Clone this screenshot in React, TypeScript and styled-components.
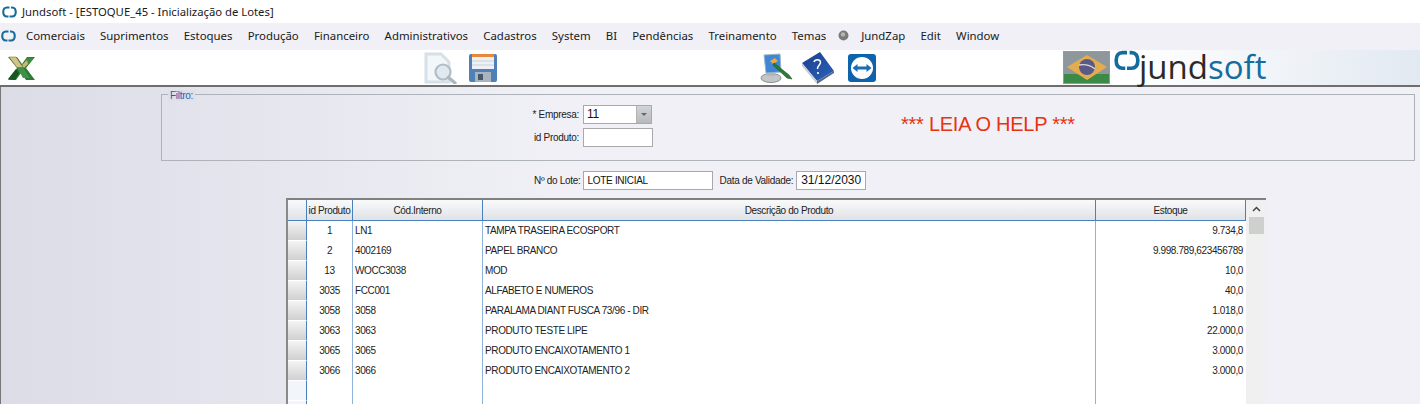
import React from "react";
import styled, { createGlobalStyle } from "styled-components";

const GlobalStyle = createGlobalStyle`
  html, body { margin: 0; padding: 0; background: #f0f0f5; overflow: hidden; }
  body { font-family: "Liberation Sans", Arial, sans-serif; }
`;

const Window = styled.div`
  width: 1420px;
  height: 404px;
  display: flex;
  flex-direction: column;
  overflow: hidden;
`;

const TitleBar = styled.div`
  height: 23px;
  flex: none;
  display: flex;
  align-items: center;
  gap: 5px;
  padding-left: 2px;
  background: #fff;
  font: 11.3px "Noto Sans", sans-serif;
  color: #1a1a1a;
`;

const MenuBar = styled.div`
  height: 27px;
  flex: none;
  box-sizing: border-box;
  padding: 0 0 2px 1px;
  display: flex;
  align-items: center;
  background: #f0f0f6;
  font: 11.4px "Noto Sans", sans-serif;
  color: #1a1a1a;
`;

const MenuList = styled.div`
  display: flex;
  align-items: center;
  gap: 15.2px;
  margin-left: 10px;
`;

const MenuDot = styled.span`
  display: flex;
  margin: 0 -3.5px 0 -3px;
`;

const ToolBar = styled.div`
  height: 35px;
  flex: none;
  display: flex;
  align-items: center;
  padding-left: 7px;
  background: linear-gradient(90deg, #fff 0, #fff 1130px, #e2e9f1 1420px);
  border-bottom: 2px solid #6e6e6e;
`;

const ToolSlot = styled.div<{ $left?: number }>`
  display: flex;
  margin-left: ${(p) => p.$left ?? 0}px;
`;

const Logo = styled.div`
  display: flex;
  align-items: flex-start;
  margin-left: 4px;
  height: 35px;
  width: 158px;
`;

const LogoText = styled.div`
  font: 500 33px/33px "Open Sans", sans-serif;
  margin: 0 0 0 -1px;
  color: #2c2a28;
  b { font-weight: 500; color: #156d9e; }
`;

const Main = styled.div`
  flex: 1;
  display: flex;
  flex-direction: column;
  padding: 7px 5px 0 160px;
  background: linear-gradient(90deg, #dcdce7 0, #f0f0f6 560px);
  border-left: 1px solid #777;
  min-height: 0;
`;

const FilterBox = styled.div`
  flex: none;
  height: 67px;
  box-sizing: border-box;
  border: 1px solid #aeb3ba;
  position: relative;
  display: grid;
  grid-template-columns: 421px 70px 1fr;
  grid-template-rows: 23px 23px;
  align-content: start;
  padding-top: 10px;
  letter-spacing: -0.3px;
`;

const Legend = styled.span`
  position: absolute;
  left: 6px;
  top: -5px;
  padding: 0 2px;
  background: #dfdfe9;
  font: 10px/11px "Liberation Sans", sans-serif;
  color: #2a5db0;
`;

const FieldLabel = styled.label`
  font-size: 10px;
  color: #222;
  display: flex;
  align-items: center;
  justify-content: flex-end;
  padding-right: 4px;
  height: 19px;
`;

const ComboBox = styled.div`
  width: 69px;
  height: 19px;
  display: flex;
  box-sizing: border-box;
  border: 1px solid #a9a9a9;
  background: #fff;
`;

const ComboValue = styled.span`
  flex: 1;
  font-size: 12px;
  line-height: 17px;
  padding-left: 3px;
  color: #111;
`;

const ComboButton = styled.span`
  width: 14px;
  background: linear-gradient(180deg, #d2d5d8, #b6babd);
  border-left: 1px solid #b4b4b4;
  display: flex;
  align-items: center;
  justify-content: center;
  &::after {
    content: "";
    border-left: 3px solid transparent;
    border-right: 3px solid transparent;
    border-top: 3px solid #666;
  }
`;

const TextField = styled.div<{ $width: number }>`
  width: ${(p) => p.$width}px;
  height: 19px;
  box-sizing: border-box;
  border: 1px solid #a9a9a9;
  background: #fff;
  font-size: 10px;
  line-height: 18px;
  padding-left: 4px;
  color: #111;
`;

const DateField = styled(TextField)`
  font-size: 12px;
  line-height: 16px;
  padding-left: 0;
  text-align: center;
  letter-spacing: 0;
`;

const HelpNote = styled.div`
  grid-column: 3;
  grid-row: 1 / span 2;
  font-size: 20px;
  line-height: 24px;
  letter-spacing: -0.25px;
  color: #e8330f;
  padding: 7px 0 0 248px;
  white-space: nowrap;
`;

const LotRow = styled.div`
  flex: none;
  display: flex;
  align-items: center;
  height: 19px;
  margin: 10px 0 0 373px;
  letter-spacing: -0.3px;
`;

const LotLabel = styled.span`
  font-size: 10px;
  color: #222;
  margin-right: 2px;
`;

const LotLabelSecond = styled(LotLabel)`
  margin: 0 3px 0 7px;
`;

const Grid = styled.div`
  width: 980px;
  flex: 1;
  min-height: 0;
  overflow: hidden;
  margin: 8px 0 0 125px;
  border-top: 2px solid #808080;
  border-left: 2px solid #8a8a8a;
  background: #fff;
  display: flex;
  box-sizing: border-box;
  letter-spacing: -0.38px;
`;

const GridBody = styled.div`
  width: 958px;
  display: flex;
  flex-direction: column;
`;

const HeaderRow = styled.div`
  display: grid;
  flex: none;
  grid-template-columns: 19px 46px 130px 613px 150px;
  height: 20px;
  background: linear-gradient(180deg, #fafafb, #dfe2e6);
  border-bottom: 1px solid #4a7fc0;
`;

const HeaderCell = styled.div`
  font-size: 10px;
  line-height: 21px;
  text-align: center;
  color: #222;
  border-right: 1px solid #4a7fc0;
  white-space: nowrap;
`;

const Row = styled.div`
  display: grid;
  flex: none;
  grid-template-columns: 19px 46px 130px 613px 150px;
  height: 20px;
`;

const RowMarker = styled.div<{ $empty?: boolean }>`
  background: ${(p) =>
    p.$empty ? "#f2f6fb" : "linear-gradient(180deg, #f4f4f4, #d0d0d2)"};
  border-right: 1px solid #4a7fc0;
  border-bottom: 1px solid #fff;
  box-sizing: border-box;
`;

const Cell = styled.div<{ $align?: string; $last?: boolean }>`
  font-size: 10px;
  line-height: 20px;
  color: #222;
  padding: 0 ${(p) => (p.$align === "right" ? 3 : 2)}px;
  text-align: ${(p) => p.$align ?? "left"};
  border-right: ${(p) => (p.$last ? "none" : "1px solid #8fb2d8")};
  white-space: nowrap;
`;

const ScrollBar = styled.div`
  width: 20px;
  background: #f0f0f0;
  display: flex;
  flex-direction: column;
  align-items: center;
`;

const ScrollArrow = styled.div`
  height: 17px;
  width: 100%;
  display: flex;
  align-items: center;
  justify-content: center;
`;

const ScrollThumb = styled.div`
  width: 15px;
  height: 17px;
  background: #cdd0cc;
`;

const JundMark = ({ size = 15 }: { size?: number }) => (
  <svg width={size} height={size * 0.8} viewBox="0 0 30 24">
    <path
      d="M15 3h-5C5 3 2.500 6 2.500 12s2.500 9 7.500 9h3M18 3h2c5 0 7.500 3 7.500 9s-2.500 9-7.500 9h-5"
      fill="none"
      stroke="#146c9c"
      strokeWidth="4.200"
    />
  </svg>
);

const ExcelIcon = () => (
  <svg width="29" height="26" viewBox="0 0 29 26">
    <path d="M1 2h9l5 7 5-7h8l-9 11 9 12h-9l-5-7-5 7H1l9-12z" fill="#2c7a38" />
    <path d="M2 2h7l7 10.500h-6z" fill="#d2c386" stroke="#8a7a3c" strokeWidth=".6" />
    <path d="M16 12.500l7 10.500h-7l-6-10.500z" fill="#3f9148" />
    <path d="M20 3h7l-6 7h-5z" fill="#3e8c40" />
    <path d="M15 10l5-5 1 4-4 4z" fill="#c9b873" />
    <path d="M1 24l8-10 3 4-4 7z" fill="#17571f" />
  </svg>
);

const SearchDocIcon = () => (
  <svg width="33" height="32" viewBox="0 0 33 32">
    <path d="M2 2h15l8 8v20H2z" fill="#f4f7fa" stroke="#d6e0e9" strokeWidth="3" />
    <circle cx="19" cy="20" r="7.5" fill="#dfe9f2" stroke="#b4bcc4" strokeWidth="2.2" />
    <path d="M24.5 25.5L31 31" stroke="#b0b6bc" strokeWidth="3.4" strokeLinecap="round" />
  </svg>
);

const FloppyIcon = () => (
  <svg width="28" height="28" viewBox="0 0 28 28">
    <rect width="28" height="28" rx="2" fill="#4f80b8" />
    <rect x="3" width="22" height="3" fill="#e8893a" />
    <rect x="3" y="3" width="22" height="12" fill="#eef1f4" />
    <path d="M3 7h22M3 11h22" stroke="#c9d2db" />
    <rect x="6" y="18" width="16" height="10" fill="#aab4bf" />
    <rect x="9" y="20" width="5" height="6" fill="#47586a" />
  </svg>
);

const PaintIcon = () => (
  <svg width="33" height="30" viewBox="0 0 33 30">
    <ellipse cx="11" cy="25" rx="10" ry="4.5" fill="#c3c6c9" stroke="#8d8f92" />
    <path d="M7 17h8v6H7z" fill="#b3b6ba" />
    <path d="M4 2l16-1 1 18-15 1z" fill="#3f86d4" stroke="#9bb4c9" />
    <path d="M10 8l5-3 3 3-5 3z" fill="#efa83f" />
    <path d="M14 10l15 12 3 4-5-1-14-13z" fill="#2d7a3a" stroke="#1c4f25" strokeWidth=".6" />
  </svg>
);

const BookIcon = () => (
  <svg width="32" height="32" viewBox="0 0 32 32">
    <defs>
      <linearGradient id="bookCover" x1="0" y1="0" x2="1" y2="1">
        <stop offset="0" stopColor="#1a3f90" />
        <stop offset="1" stopColor="#2c62b8" />
      </linearGradient>
    </defs>
    <path d="M0 11L18 0l14 19-17 10z" fill="url(#bookCover)" />
    <path d="M0 11l15 18v3L0 14z" fill="#c6ccd6" />
    <path d="M15 29l17-10v2L15 32z" fill="#55698f" />
    <path
      d="M12 10c1-3 6-3 6.500 0 .4 3-3.500 3.500-3 7"
      fill="none"
      stroke="#fff"
      strokeWidth="1.500"
    />
    <circle cx="16" cy="21" r="1.100" fill="#fff" />
  </svg>
);

const TeamViewerIcon = () => (
  <svg width="28" height="28" viewBox="0 0 28 28">
    <rect width="28" height="28" rx="3" fill="#0e63ad" />
    <circle cx="14" cy="14" r="11" fill="#fff" />
    <path d="M4.500 14l5-4v2.500h9V10l5 4-5 4v-2.500h-9V18z" fill="#1a6cb5" />
  </svg>
);

const FlagIcon = () => (
  <svg width="47" height="33" viewBox="0 0 47 33">
    <rect x=".5" y=".5" width="46" height="32" fill="#8e989c" stroke="#9a9a90" />
    <rect x="1" y="23" width="45" height="9" fill="#3c8a48" />
    <path d="M4 16L24 4l20 12-20 13z" fill="#e3ac4f" />
    <circle cx="24" cy="16" r="8" fill="#5a5a88" />
    <path d="M16 14c6-1 11 0 16 4" stroke="#d8d8d8" strokeWidth="1.400" fill="none" />
  </svg>
);

const JundZapDot = () => (
  <svg width="11" height="11" viewBox="0 0 10 10">
    <circle cx="5" cy="5" r="4.500" fill="#7a7a7a" />
    <circle cx="4.500" cy="4" r="2" fill="#b5b5b5" />
  </svg>
);

const MENU_LEFT = [
  "Comerciais",
  "Suprimentos",
  "Estoques",
  "Produção",
  "Financeiro",
  "Administrativos",
  "Cadastros",
  "System",
  "BI",
  "Pendências",
  "Treinamento",
  "Temas",
];

const PRODUCTS = [
  ["1", "LN1", "TAMPA TRASEIRA ECOSPORT", "9.734,8"],
  ["2", "4002169", "PAPEL BRANCO", "9.998.789,623456789"],
  ["13", "WOCC3038", "MOD", "10,0"],
  ["3035", "FCC001", "ALFABETO E NUMEROS", "40,0"],
  ["3058", "3058", "PARALAMA DIANT FUSCA 73/96 - DIR", "1.018,0"],
  ["3063", "3063", "PRODUTO TESTE LIPE", "22.000,0"],
  ["3065", "3065", "PRODUTO ENCAIXOTAMENTO 1", "3.000,0"],
  ["3066", "3066", "PRODUTO ENCAIXOTAMENTO 2", "3.000,0"],
];

const EMPTY_ROWS = [0, 1];

export default function App() {
  return (
    <Window>
      <GlobalStyle />
      <TitleBar>
        <JundMark />
        <span>Jundsoft - [ESTOQUE_45 - Inicialização de Lotes]</span>
      </TitleBar>
      <MenuBar>
        <JundMark />
        <MenuList>
          {MENU_LEFT.map((m) => (
            <span key={m}>{m}</span>
          ))}
          <MenuDot>
            <JundZapDot />
          </MenuDot>
          <span>JundZap</span>
          <span>Edit</span>
          <span>Window</span>
        </MenuList>
      </MenuBar>
      <ToolBar>
        <ExcelIcon />
        <ToolSlot $left={388}>
          <SearchDocIcon />
        </ToolSlot>
        <ToolSlot $left={12}>
          <FloppyIcon />
        </ToolSlot>
        <ToolSlot $left={263}>
          <PaintIcon />
        </ToolSlot>
        <ToolSlot $left={9}>
          <BookIcon />
        </ToolSlot>
        <ToolSlot $left={14}>
          <TeamViewerIcon />
        </ToolSlot>
        <ToolSlot $left={187}>
          <FlagIcon />
        </ToolSlot>
        <Logo>
          <JundMark size={26} />
          <LogoText>
            jund<b>soft</b>
          </LogoText>
        </Logo>
      </ToolBar>
      <Main>
        <FilterBox>
          <Legend>Filtro:</Legend>
          <FieldLabel>* Empresa:</FieldLabel>
          <ComboBox>
            <ComboValue>11</ComboValue>
            <ComboButton />
          </ComboBox>
          <HelpNote>*** LEIA O HELP ***</HelpNote>
          <FieldLabel>id Produto:</FieldLabel>
          <TextField $width={70} />
        </FilterBox>
        <LotRow>
          <LotLabel>Nº do Lote:</LotLabel>
          <TextField $width={130}>LOTE INICIAL</TextField>
          <LotLabelSecond>Data de Validade:</LotLabelSecond>
          <DateField $width={70}>31/12/2030</DateField>
        </LotRow>
        <Grid>
          <GridBody>
            <HeaderRow>
              <HeaderCell />
              <HeaderCell>id Produto</HeaderCell>
              <HeaderCell>Cód.Interno</HeaderCell>
              <HeaderCell>Descrição do Produto</HeaderCell>
              <HeaderCell>Estoque</HeaderCell>
            </HeaderRow>
            {PRODUCTS.map(([id, code, desc, stock]) => (
              <Row key={id}>
                <RowMarker />
                <Cell $align="center">{id}</Cell>
                <Cell>{code}</Cell>
                <Cell>{desc}</Cell>
                <Cell $align="right" $last>
                  {stock}
                </Cell>
              </Row>
            ))}
            {EMPTY_ROWS.map((n) => (
              <Row key={n}>
                <RowMarker $empty />
                <Cell />
                <Cell />
                <Cell />
                <Cell $last />
              </Row>
            ))}
          </GridBody>
          <ScrollBar>
            <ScrollArrow>
              <svg width="9" height="6" viewBox="0 0 9 6">
                <path d="M1 5l3.500-3.500L8 5" fill="none" stroke="#444" strokeWidth="1.500" />
              </svg>
            </ScrollArrow>
            <ScrollThumb />
          </ScrollBar>
        </Grid>
      </Main>
    </Window>
  );
}
